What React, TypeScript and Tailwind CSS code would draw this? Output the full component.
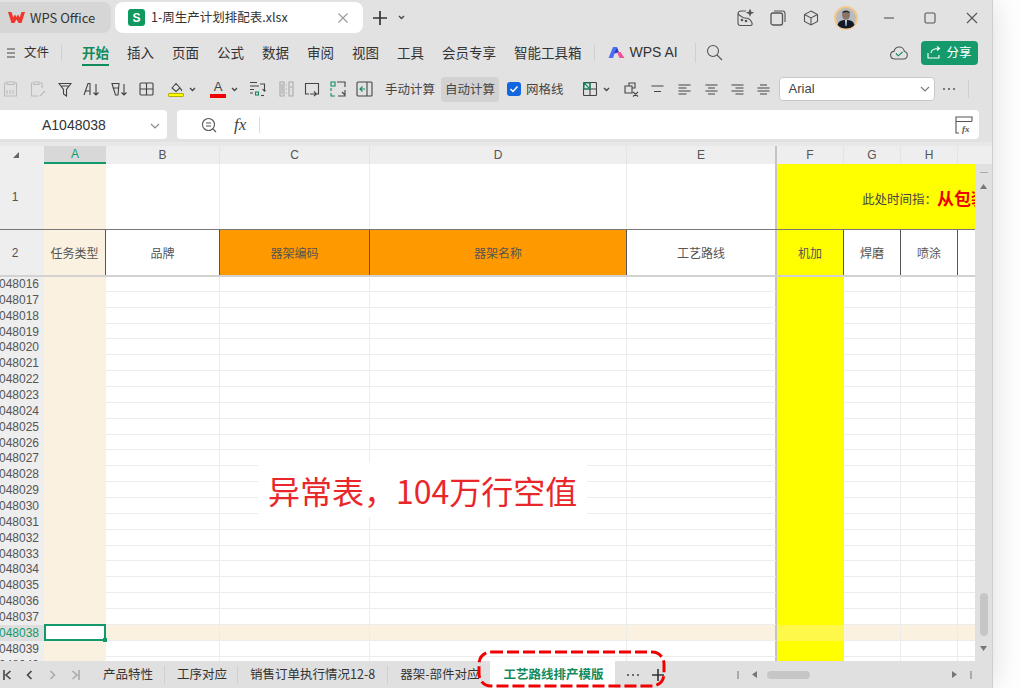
import type { ReactNode } from "react";

const ui = "font-['Noto_Sans_CJK_SC','Liberation_Sans',sans-serif]";

function Ic({ w = 18, h = 18, vb, className = "", children }: { w?: number; h?: number; vb?: string; className?: string; children: ReactNode }) {
  return (
    <svg width={w} height={h} viewBox={vb ?? `0 0 ${w} ${h}`} fill="none" stroke="currentColor" strokeWidth="1.1" className={`shrink-0 ${className}`}>
      {children}
    </svg>
  );
}

function Caret({ className = "" }: { className?: string }) {
  return (
    <svg width="7" height="5" viewBox="0 0 7 5" className={`shrink-0 ${className}`}>
      <path d="M1 1l2.5 2.5L6 1" fill="none" stroke="#444" strokeWidth="1.3" />
    </svg>
  );
}

function TitleBar() {
  return (
    <div className="flex h-[36px] items-center pt-[2px] pb-[3px] text-[#333]">
      <div className="flex h-[31px] w-[111px] items-center rounded-r-lg bg-[#d6d6d6] pl-[8px]">
        <svg width="17" height="11" viewBox="0 0 17 11">
          <path d="M0 0h3.500l1.800 5.500L7 2.500 8.500 5l1.500-2.500 1.700 3L13.500 0H17l-3.500 11h-2.800L8.500 7.500 6.300 11H3.500z" fill="#f0352a" />
        </svg>
        <span className="ml-[5px] text-[13px] whitespace-nowrap">WPS Office</span>
      </div>
      <div className="ml-[4px] flex h-[31px] w-[248px] items-center rounded-lg bg-white pl-[13px]">
        <div className="flex h-[17px] w-[17px] items-center justify-center rounded-[3px] bg-[#10995f] font-['Liberation_Sans',sans-serif] text-[12px] font-bold text-white">S</div>
        <span className="ml-[6px] w-[186px] text-[12.5px] whitespace-nowrap">1-周生产计划排配表.xlsx</span>
        <Ic w={12} h={12} className="text-[#999]">
          <path d="M1.500 1.500l9 9M10.500 1.500l-9 9" />
        </Ic>
      </div>
      <Ic w={16} h={16} className="ml-[9px] text-[#333]">
        <path d="M8 1v14M1 8h14" strokeWidth="1.700" />
      </Ic>
      <Caret className="ml-[10px]" />
      <div className="ml-auto flex items-center pr-[14px] text-[#555]">
        <Ic w={18} h={18}>
          <path d="M2 5c0-2 1-3 3-3h5M2 5v9c0 1.500 1 2.500 2.500 2.500h10c1.500 0 2-1 1.500-2.500-1-3-3-5-7-5-2 0-4-1.500-7-4z" />
          <path d="M14 1l.7 2 2 .7-2 .7-.7 2-.7-2-2-.7 2-.7z" fill="currentColor" />
          <circle cx="6" cy="11" r=".8" fill="currentColor" />
          <circle cx="10" cy="12" r=".8" fill="currentColor" />
        </Ic>
        <Ic w={16} h={16} className="ml-[16px]">
          <rect x="1" y="3" width="11.500" height="12" rx="2" strokeWidth="1.300" />
          <path d="M4 1h8.500c1.500 0 2.500 1 2.500 2.500V12" />
        </Ic>
        <Ic w={16} h={16} className="ml-[17px]">
          <path d="M8 1l6.500 3.500v7L8 15l-6.500-3.500v-7zM1.500 4.500L8 8l6.500-3.500M8 8v7" />
        </Ic>
        <svg width="24" height="24" viewBox="0 0 24 24" className="ml-[15px]">
          <circle cx="12" cy="12" r="11" fill="#b8bcc0" stroke="#f3c98a" strokeWidth="2" />
          <ellipse cx="12" cy="9" rx="4" ry="4.800" fill="#8a7468" />
          <path d="M8 7c1-3 7-3 8 0-2-1-6-1-8 0z" fill="#222" />
          <path d="M3.500 19c1-4 4-5 8.500-5s7.500 1 8.500 5c-2 2.500-5 3.500-8.500 3.500S5.500 21.500 3.500 19z" fill="#111827" />
          <path d="M11 14h2l-.5 6h-1z" fill="#cdd5e0" />
        </svg>
        <Ic w={12} h={12} className="ml-[25px]"><path d="M1 6h10" /></Ic>
        <Ic w={12} h={12} className="ml-[29px]"><rect x="1" y="1" width="10" height="10" rx="1.500" /></Ic>
        <Ic w={12} h={12} className="ml-[30px]"><path d="M1 1l10 10M11 1L1 11" /></Ic>
      </div>
    </div>
  );
}

function RibbonTabs() {
  const tabs = ["插入", "页面", "公式", "数据", "审阅", "视图", "工具", "会员专享", "智能工具箱"];
  return (
    <div className="flex h-[36px] items-center pb-[3px] text-[13.5px] text-[#333]">
      <Ic w={10} h={10} className="ml-[6px]"><path d="M1 1h8M1 5h8M1 9h8" strokeWidth="0.900" /></Ic>
      <span className="ml-[8px] text-[12.5px]">文件</span>
      <div className="ml-[12px] h-[16px] w-px bg-[#cfcfcf]" />
      <div className="relative ml-[20px] font-bold text-[#128a5c]">
        开始
        <div className="absolute top-[22px] right-0 left-0 h-[2px] bg-[#128a5c]" />
      </div>
      <div className="ml-[18px] flex gap-[18px]">
        {tabs.map((t) => (
          <span key={t} className="whitespace-nowrap">{t}</span>
        ))}
      </div>
      <div className="ml-[12px] h-[16px] w-px bg-[#cfcfcf]" />
      <svg width="17" height="14" viewBox="0 0 17 14" className="ml-[13px]">
        <path d="M0.500 12L5 1h4L5 12z" fill="#4b6ef5" />
        <path d="M6 7.500L9 1l2 5.500z" fill="#2a3fbf" />
        <path d="M9 6l3.500 0 4 6h-5z" fill="#f0509a" />
      </svg>
      <span className="ml-[5px] font-['Liberation_Sans',sans-serif] text-[14px] whitespace-nowrap">WPS AI</span>
      <div className="ml-[17px] h-[20px] w-px bg-[#cfcfcf]" />
      <Ic w={17} h={17} className="ml-[10px] text-[#555]">
        <circle cx="7" cy="7" r="5.500" />
        <path d="M11 11l5 5" />
      </Ic>
      <Ic w={18} h={14} className="ml-auto text-[#555]">
        <path d="M5 13C2 13 .6 11 .6 9c0-2 1.400-3.500 3.400-3.600C4.600 2.800 6.800 1 9.300 1c2.700 0 4.800 2 5 4.500 1.800.2 3 1.800 3 3.600 0 2-1.500 3.900-3.700 3.900z" />
        <path d="M6 7.500l2.300 2.300L12.500 6" stroke="#128a5c" />
      </Ic>
      <div className="mr-[14px] ml-[13px] flex h-[24px] w-[57px] items-center justify-center gap-[5px] rounded-[4px] bg-[#159a6c] text-[12.5px] text-white">
        <Ic w={14} h={13}>
          <path d="M1 7v5h11V9M4 7c0-3 3-4.500 8-4.500M10 .5l2.500 2-2.500 2" />
        </Ic>
        分享
      </div>
    </div>
  );
}

function Toolbar() {
  return (
    <div className="flex h-[34px] items-center text-[12.5px] text-[#444]">
      <Ic w={15} h={16} className="ml-[3px] text-[#bbb]">
        <path d="M3 2H1.500v13h12V2H12M4 1h7v2.500H4z" />
        <path d="M4 9v4M7 9v4M10 9v4" />
      </Ic>
      <Ic w={17} h={16} className="ml-[12px] text-[#bbb]">
        <path d="M3 2H1.500v13h7M10 2h2v5M4 1h5v2.500H4zM10 15l5-5" />
      </Ic>
      <Ic w={14} h={15} className="ml-[11px]"><path d="M1 1.500h12L8.500 7.500V14l-3-2V7.500zM3.500 4h7" /></Ic>
      <Ic w={18} h={15} className="ml-[11px]">
        <path d="M1 13L5 1.500h2V13M2.500 9H7M13 2v11M10.500 10.500L13 13l2.500-2.500" />
      </Ic>
      <Ic w={18} h={15} className="ml-[10px]">
        <path d="M1 1.500h7L7 13H4.500zM1.500 6H7.500M13 2v11M10.500 10.500L13 13l2.500-2.500" />
      </Ic>
      <Ic w={15} h={14} className="ml-[10px]"><rect x="1" y="1" width="13" height="12" rx="1" /><path d="M7.500 1v12M1 7h13" /></Ic>
      <div className="ml-[14px] flex flex-col items-center">
        <Ic w={16} h={11}><path d="M4 6l4-4.500 4 4.500-4 3.500zM12 6c1 1 2 2 1.500 3" /></Ic>
        <div className="h-[4px] w-[16px] rounded-[1px] border border-[#b5b000] bg-[#ffff00]" />
      </div>
      <Caret className="ml-[5px]" />
      <div className="ml-[14px] flex flex-col items-center">
        <span className="font-['Liberation_Sans',sans-serif] text-[13px] leading-[12px]">A</span>
        <div className="mt-[1px] h-[4px] w-[16px] bg-[#f00000]" />
      </div>
      <Caret className="ml-[5px]" />
      <Ic w={17} h={16} className="ml-[11px]">
        <path d="M1 1.500h7M1 5h9M1 8.500h4M1 12h3M11 3h4.500v7M13.500 8l2 2.200 1-1" />
        <rect x="6.500" y="11" width="3" height="3" stroke="#128a5c" />
        <path d="M12 14.500h3" />
      </Ic>
      <Ic w={15} h={16} className="ml-[13px] text-[#aaa]"><path d="M1 1h4v14H1zM10 1h4v14h-4zM3 3v10M12 5v2M7 4h1M7 8h1M7 12h1" /></Ic>
      <Ic w={16} h={15} className="ml-[10px]"><path d="M5 12H1.500V1.500h13V12H12M6 12h6M10 9.500l2.500 2.500L10 14" /></Ic>
      <Ic w={16} h={16} className="ml-[10px]">
        <path d="M1 1h4v4H1zM1 7v3M1 12v3h4" stroke="#128a5c" />
        <path d="M7 1h8v5M15 9v6H8M12 11l3 3" />
      </Ic>
      <Ic w={17} h={16} className="ml-[10px]">
        <rect x="1" y="1" width="15" height="14" rx="1" />
        <path d="M11 1v14" />
        <path d="M9 8H4M6.500 5.500L4 8l2.500 2.500" stroke="#128a5c" />
      </Ic>
      <span className="ml-[12px] whitespace-nowrap">手动计算</span>
      <div className="ml-[6px] flex h-[25px] w-[58px] items-center justify-center rounded-[4px] bg-[#d2d2d2] whitespace-nowrap">自动计算</div>
      <div className="ml-[8px] flex h-[14px] w-[14px] items-center justify-center rounded-[3px] bg-[#1266e0]">
        <Ic w={10} h={10} className="text-white"><path d="M1.500 5l2.500 2.500 4.500-5" strokeWidth="1.500" /></Ic>
      </div>
      <span className="ml-[5px] whitespace-nowrap">网格线</span>
      <Ic w={14} h={14} className="ml-[19px]">
        <rect x=".5" y=".5" width="13" height="13" rx="1" />
        <path d="M7 .5v13M.5 7h13" />
        <path d="M1 1l5.500 5.500M1 1h6v6H1z" stroke="#128a5c" />
      </Ic>
      <Caret className="ml-[6px]" />
      <Ic w={15} h={15} className="ml-[14px]">
        <path d="M5 4V1h6v5h-3M1 4h7v7H1zM9 10l5 4.500M14 10l-5 4.500" />
      </Ic>
      <Ic w={13} h={8} className="ml-[12px]"><path d="M.5 1h12M3 6.500h7" /></Ic>
      <Ic w={13} h={11} className="ml-[14px]"><path d="M.5 1h12M.5 4h8M.5 7h12M.5 10h8" /></Ic>
      <Ic w={13} h={11} className="ml-[14px]"><path d="M.5 1h12M3 4h7M.5 7h12M3 10h7" /></Ic>
      <Ic w={13} h={11} className="ml-[13px]"><path d="M.5 1h12M4.500 4h8M.5 7h12M4.500 10h8" /></Ic>
      <Ic w={13} h={11} className="ml-[13px]"><path d="M3 1h7M.5 4h12M.5 7h12M3 10h7" /></Ic>
      <div className="ml-[9px] flex h-[24px] w-[156px] items-center justify-between rounded-[4px] border border-[#c9c9c9] bg-white pr-[4px] pl-[9px] font-['Liberation_Sans',sans-serif] text-[13px]">
        Arial
        <Ic w={10} h={6} className="text-[#777]"><path d="M1 1l4 4 4-4" /></Ic>
      </div>
      <div className="ml-[8px] flex gap-[3px]">
        <div className="h-[2px] w-[2px] rounded-full bg-[#555]" />
        <div className="h-[2px] w-[2px] rounded-full bg-[#555]" />
        <div className="h-[2px] w-[2px] rounded-full bg-[#555]" />
      </div>
      <div className="ml-[13px] h-[18px] w-px bg-[#cfcfcf]" />
    </div>
  );
}

function FormulaBar() {
  return (
    <div className="flex h-[36px] items-start gap-[10px] pt-[4px] pr-[13px] text-[#333]">
      <div className="flex h-[29px] w-[167px] items-center justify-between rounded-r-[4px] bg-white pt-[2px] pr-[7px] pl-[42px] font-['Liberation_Sans',sans-serif] text-[14px]">
        A1048038
        <Ic w={10} h={6} className="text-[#888]"><path d="M1 1l4 4 4-4" /></Ic>
      </div>
      <div className="flex h-[29px] flex-1 items-center rounded-[4px] bg-white pr-[6px] pl-[24px]">
        <Ic w={16} h={16} className="text-[#555]">
          <circle cx="7.500" cy="7.500" r="6" />
          <path d="M5 6h5M5 9h5M12 12l3 3" />
        </Ic>
        <span className="ml-[17px] font-['Liberation_Serif',serif] text-[17px] text-[#444] italic">fx</span>
        <div className="ml-[13px] h-[16px] w-px bg-[#ddd]" />
        <Ic w={18} h={18} className="ml-auto text-[#555]">
          <path d="M1 6V1h16v4M1 5.500h16M1 6v11h3" />
          <text x="7" y="16" fontSize="9" fontStyle="italic" fontFamily="Liberation Serif" fontWeight="bold" fill="currentColor" stroke="none">fx</text>
        </Ic>
      </div>
    </div>
  );
}

const colH = "flex items-center justify-center border-r border-[#e3e3e3]";

function ColumnHeader() {
  const cols: [string, string][] = [
    ["B", "w-[114px]"],
    ["C", "w-[150px]"],
    ["D", "w-[257px]"],
  ];
  return (
    <div className="flex h-[18px] bg-[#eeeeee] font-['Liberation_Sans',sans-serif] text-[12px] text-[#555]">
      <div className="flex w-[44px] items-center justify-center pr-[13px] text-[#666]">
        <svg width="6" height="6" viewBox="0 0 6 6"><path d="M6 0v6H0z" fill="#666" /></svg>
      </div>
      <div className="flex w-[62px] items-center justify-center border-b-2 border-[#129a6c] bg-[#d8d8d8] text-[#129a6c]">A</div>
      {cols.map(([l, w]) => (
        <div key={l} className={`${colH} ${w}`}>{l}</div>
      ))}
      <div className="flex w-[150px] items-center justify-center border-r-2 border-[#c4c4c4]">E</div>
      <div className={`${colH} w-[67px]`}>F</div>
      <div className={`${colH} w-[57px]`}>G</div>
      <div className={`${colH} w-[57px]`}>H</div>
      <div className="w-[34px]" />
    </div>
  );
}

function FrozenRows() {
  const hd = "flex w-[44px] items-center justify-center bg-[#eeeeee] pr-[14px] font-['Liberation_Sans',sans-serif] text-[12px] text-[#555]";
  const dark = "flex items-center justify-center border-r border-[#555] text-[12px] text-[#555]";
  return (
    <div className="w-[975px]">
      <div className="flex h-[66px] border-b border-[#777]">
        <div className={hd}>1</div>
        <div className="w-[62px] bg-[#faf1e0]" />
        <div className="w-[114px] border-r border-[#ececec]" />
        <div className="w-[150px] border-r border-[#ececec]" />
        <div className="w-[257px] border-r border-[#ececec]" />
        <div className="w-[150px] border-r-2 border-[#c4c4c4]" />
        <div className="flex w-[198px] items-center overflow-hidden bg-[#ffff00] pt-[3px] pl-[85px] whitespace-nowrap">
          <span className="pt-[2px] text-[12.5px] text-[#444]">此处时间指：</span>
          <span className="text-[17px] leading-[20px] font-bold text-[#f00000]">从包装完工</span>
        </div>
      </div>
      <div className="flex h-[47px] border-b-[2px] border-[#d2d2d2]">
        <div className={hd}>2</div>
        <div className={`${dark} w-[62px] bg-[#faf1e0]`}>任务类型</div>
        <div className={`${dark} w-[114px]`}>品牌</div>
        <div className={`${dark} w-[150px] bg-[#ff9900] text-[#6a4a10]`}>器架编码</div>
        <div className={`${dark} w-[257px] bg-[#ff9900] text-[#6a4a10]`}>器架名称</div>
        <div className="flex w-[150px] items-center justify-center border-r-2 border-[#c4c4c4] text-[12px] text-[#555]">工艺路线</div>
        <div className={`${dark} w-[67px] bg-[#ffff00]`}>机加</div>
        <div className={`${dark} w-[57px]`}>焊磨</div>
        <div className={`${dark} w-[57px]`}>喷涂</div>
        <div className="w-[17px]" />
      </div>
    </div>
  );
}

function DataRow({ n }: { n: number }) {
  const sel = n === 1048038;
  const line = "border-r border-b border-[#ececec]";
  return (
    <div className={`flex h-[15.87px] shrink-0 ${sel ? "bg-[#faf1e0]" : ""}`}>
      <div className={`flex w-[44px] items-center justify-end overflow-hidden pr-[5px] font-['Liberation_Sans',sans-serif] text-[12px] ${sel ? "bg-[#dedede] text-[#129a6c]" : "bg-[#eeeeee] text-[#555]"}`}>
        {n}
      </div>
      {sel ? (
        <div className="relative -mt-px h-[17px] w-[62px] border-2 border-[#129a6c] bg-white">
          <div className="absolute -right-[3px] -bottom-[3px] h-[4px] w-[4px] bg-[#129a6c]" />
        </div>
      ) : (
        <div className="w-[62px] bg-[#faf1e0]" />
      )}
      <div className={`w-[114px] ${line}`} />
      <div className={`w-[150px] ${line}`} />
      <div className={`w-[257px] ${line}`} />
      <div className="w-[150px] border-r-2 border-b border-r-[#c4c4c4] border-b-[#ececec]" />
      <div className={`w-[67px] ${sel ? "bg-[#fdf84a]" : "bg-[#ffff00]"}`} />
      <div className={`w-[57px] ${line}`} />
      <div className={`w-[57px] ${line}`} />
      <div className="w-[17px] border-b border-[#ececec]" />
    </div>
  );
}

function Sheet() {
  const rows = Array.from({ length: 25 }, (_, i) => 1048016 + i);
  return (
    <div className="relative flex h-[497px] overflow-hidden bg-white">
      <div className="w-[975px]">
        <FrozenRows />
        <div className="h-[384px] overflow-hidden">
          <div className="-mt-[1px]">
            {rows.map((n) => (
              <DataRow key={n} n={n} />
            ))}
          </div>
        </div>
      </div>
      <div className="flex w-[17px] flex-col items-center bg-[#e0e0e0] pt-[8px]">
        <div className="h-px w-[8px] bg-[#aaa]" />
        <svg width="7" height="5" viewBox="0 0 7 5" className="mt-[11px]"><path d="M3.500 0L7 5H0z" fill="#777" /></svg>
        <div className="mt-auto mb-[10px] h-[43px] w-[8px] rounded-full bg-[#c6c6c6]" />
        <svg width="7" height="5" viewBox="0 0 7 5" className="mb-[10px]"><path d="M3.500 5L7 0H0z" fill="#777" /></svg>
      </div>
      <div className="absolute top-[299px] left-[258px] bg-white px-[10px] py-[6px] text-[32px] leading-[42px] whitespace-nowrap text-[#e9272a]">
        异常表，104万行空值
      </div>
    </div>
  );
}

function SheetTabs() {
  const nav = "text-[#444]";
  return (
    <div className="relative flex h-[27px] items-center bg-[#e0e0e0] text-[12.5px] text-[#333]">
      <Ic w={9} h={10} className={`ml-[3px] ${nav}`}><path d="M1 0v10M7.500 1L3 5l4.500 4" strokeWidth="1.600" /></Ic>
      <Ic w={7} h={10} className={`ml-[14px] ${nav}`}><path d="M5.500 1L1.500 5l4 4" strokeWidth="1.600" /></Ic>
      <Ic w={7} h={10} className="ml-[16px] text-[#aaa]"><path d="M1.500 1l4 4-4 4" strokeWidth="1.600" /></Ic>
      <Ic w={9} h={10} className="ml-[15px] text-[#aaa]"><path d="M8 0v10M1.500 1L6 5 1.500 9" strokeWidth="1.600" /></Ic>
      <span className="ml-[23px] whitespace-nowrap">产品特性</span>
      <div className="ml-[11px] h-[18px] w-px bg-[#cfcfcf]" />
      <span className="ml-[12px] whitespace-nowrap">工序对应</span>
      <div className="ml-[10px] h-[18px] w-px bg-[#cfcfcf]" />
      <span className="ml-[12px] whitespace-nowrap">销售订单执行情况12-8</span>
      <div className="ml-[12px] h-[18px] w-px bg-[#cfcfcf]" />
      <span className="ml-[12px] whitespace-nowrap">器架-部件对应</span>
      <div className="ml-[10px] flex h-full w-[125px] items-center justify-end bg-white pr-[11px] font-bold whitespace-nowrap text-[#128a5c]">工艺路线排产模版</div>
      <div className="ml-[12px] flex gap-[3px]">
        <div className="h-[2px] w-[2px] rounded-full bg-[#444]" />
        <div className="h-[2px] w-[2px] rounded-full bg-[#444]" />
        <div className="h-[2px] w-[2px] rounded-full bg-[#444]" />
      </div>
      <Ic w={12} h={12} className="ml-[13px] text-[#333]"><path d="M6 0v12M0 6h12" strokeWidth="1.600" /></Ic>
      <div className="ml-[73px] h-[8px] w-[2px] bg-[#aaa]" />
      <svg width="5" height="7" viewBox="0 0 5 7" className="ml-[13px]"><path d="M0 3.500L5 0v7z" fill="#777" /></svg>
      <div className="ml-[10px] h-[8px] w-[43px] rounded-full bg-[#c6c6c6]" />
      <svg width="5" height="7" viewBox="0 0 5 7" className="ml-[142px]"><path d="M5 3.500L0 0v7z" fill="#777" /></svg>
      <div className="ml-[13px] h-[8px] w-[2px] bg-[#aaa]" />
    </div>
  );
}

export default function App() {
  return (
    <div className={`relative h-[688px] w-[1024px] overflow-hidden bg-white ${ui}`}>
      <div className="w-[993px] border-r border-[#cfcfcf] bg-[#e2e2e2] shadow-[0_0_30px_rgba(0,0,0,0.15)]">
        <TitleBar />
        <RibbonTabs />
        <Toolbar />
        <FormulaBar />
        <div className="h-[4px] bg-[#e8e8e8]" />
        <ColumnHeader />
        <Sheet />
        <SheetTabs />
      </div>
      <svg width="190" height="40" viewBox="0 0 190 40" className="absolute top-[649px] left-[476px]">
        <rect x="3" y="3" width="185" height="34" rx="12" fill="none" stroke="#f00000" strokeWidth="3" strokeDasharray="12 4" />
      </svg>
    </div>
  );
}
